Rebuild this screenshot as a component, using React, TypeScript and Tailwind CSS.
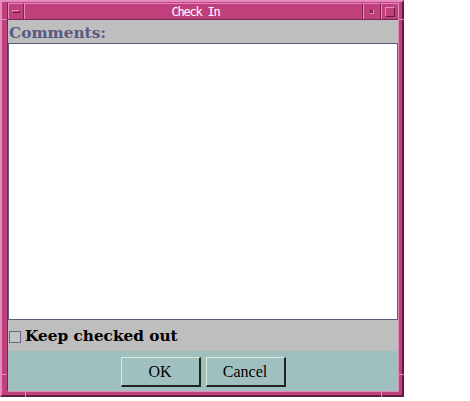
import React from "react";

export default function App() {
  const serif = { fontFamily: '"DejaVu Serif", "Liberation Serif", serif' };
  const btnSerif = { fontFamily: '"Liberation Serif", "Times New Roman", serif' };
  return (
    <div className="w-[470px] h-[401px] bg-white">
      <div className="relative flex flex-col w-[404px] h-[397px] bg-[#c0407c] border-l-2 border-t-2 border-l-[#e58cbc] border-t-[#e58cbc] border-r-2 border-b-2 border-r-[#5e1c42] border-b-[#5e1c42] pl-[5px] pr-[3px] pb-[3px]">
        {/* frame resize notches */}
        <span className="absolute left-[-2px] top-[17px] w-[7px] h-[1px] bg-[#e58cbc]" />
        <span className="absolute right-[-2px] top-[17px] w-[5px] h-[1px] bg-[#e58cbc]" />
        <span className="absolute left-[-2px] top-[372px] w-[7px] h-[1px] bg-[#e58cbc]" />
        <span className="absolute right-[-2px] top-[372px] w-[5px] h-[1px] bg-[#e58cbc]" />
        <span className="absolute left-[23px] bottom-[-2px] w-[1px] h-[5px] bg-[#e58cbc]" />
        <span className="absolute left-[379px] bottom-[-2px] w-[1px] h-[5px] bg-[#e58cbc]" />

        <div className="flex flex-col flex-1 border-l border-t border-l-[#7a2452] border-t-[#c0407c] border-r border-b border-r-[#e58cbc] border-b-[#e58cbc]">
          {/* title bar */}
          <div className="flex h-[17px] bg-[#c0407c] border-b border-b-[#7a2452]">
            <div className="w-[16px] flex items-center justify-center border-l border-t border-l-[#e58cbc] border-t-[#e58cbc] border-r border-r-[#7a2452]">
              <div className="w-[8px] h-[3px] bg-[#c0407c] border-t border-l border-t-[#e58cbc] border-l-[#e58cbc] border-b border-r border-b-[#6a1c44] border-r-[#6a1c44]" />
            </div>
            <div className="flex-1 flex items-center justify-center border-l border-t border-l-[#e58cbc] border-t-[#e58cbc] border-r border-r-[#7a2452]">
              <span
                className="text-white text-[12px] leading-none tracking-[-1.2px] pl-[4px]"
                style={{ fontFamily: '"DejaVu Sans Mono", "Liberation Mono", monospace' }}
              >
                Check In
              </span>
            </div>
            <div className="w-[18px] flex items-center justify-center border-l border-t border-l-[#e58cbc] border-t-[#e58cbc] border-r border-r-[#7a2452]">
              <div className="w-[4px] h-[4px] bg-[#7a2452] border-b border-r border-b-[#e58cbc] border-r-[#e58cbc]" />
            </div>
            <div className="w-[17px] flex items-center justify-center border-l border-t border-l-[#e58cbc] border-t-[#e58cbc]">
              <div className="w-[10px] h-[10px] border-t border-l border-t-[#e58cbc] border-l-[#e58cbc] border-b border-r border-b-[#6a1c44] border-r-[#6a1c44]" />
            </div>
          </div>

          {/* content */}
          <div className="flex flex-col flex-1 bg-[#bebebe]">
            <div className="h-[23px] flex items-center pl-[1px] pt-[4px]">
              <span className="text-[15.3px] font-bold leading-none text-[#5a5a82]" style={serif}>
                Comments:
              </span>
            </div>
            <div className="h-[277px] bg-white border border-[#5c5c80]" />
            <div className="h-[31px] flex items-center pl-[1px] pt-[3px]">
              <div className="w-[12px] h-[12px] border border-[#6a6a8c] bg-[#c4c4c4]" />
              <span className="ml-[4px] text-[15.3px] font-bold leading-none text-black" style={serif}>
                Keep checked out
              </span>
            </div>
            <div className="flex-1 bg-[#9fc0bf] flex justify-center gap-[5px] pt-[6px]">
              <button
                className="w-[80px] h-[30px] bg-[#9fc0bf] border-t border-l border-t-[#d6ecd6] border-l-[#d6ecd6] border-b-2 border-r-2 border-b-[#1e2424] border-r-[#1e2424] text-[16px] text-black leading-none"
                style={btnSerif}
              >
                OK
              </button>
              <button
                className="w-[80px] h-[30px] bg-[#9fc0bf] border-t border-l border-t-[#d6ecd6] border-l-[#d6ecd6] border-b-2 border-r-2 border-b-[#1e2424] border-r-[#1e2424] text-[16px] text-black leading-none"
                style={btnSerif}
              >
                Cancel
              </button>
            </div>
          </div>
        </div>
      </div>
    </div>
  );
}
